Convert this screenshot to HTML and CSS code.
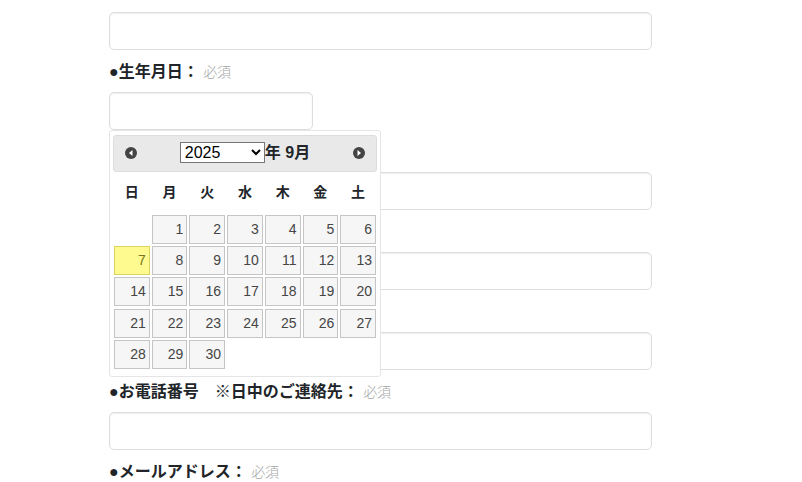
FILE: index.html
```html
<!DOCTYPE html>
<html lang="ja">
<head>
<meta charset="utf-8">
<title>フォーム</title>
<link rel="stylesheet" href="styles.css">
</head>
<body>
<form class="form">
  <div class="field"><input class="box" type="text" aria-label="氏名"></div>
  <div class="field">
    <label class="label" for="birth">●生年月日： <span class="req">必須</span></label>
    <div class="anchor">
      <input class="box box-short" id="birth" type="text">
      <div class="picker">
        <div class="head">
          <button class="nav" type="button" aria-label="前月">
            <svg viewBox="0 0 12 12" width="12" height="12"><circle cx="6" cy="6" r="6" fill="#444"/><path fill="#fff" d="M7.500 3v6L4 6z"/></svg>
          </button>
          <div class="title"><select class="year" aria-label="年"><option>2025</option></select>年 9月</div>
          <button class="nav" type="button" aria-label="翌月">
            <svg viewBox="0 0 12 12" width="12" height="12"><circle cx="6" cy="6" r="6" fill="#444"/><path fill="#fff" d="M4.500 3v6L8 6z"/></svg>
          </button>
        </div>
        <table class="days">
          <thead><tr><th>日</th><th>月</th><th>火</th><th>水</th><th>木</th><th>金</th><th>土</th></tr></thead>
          <tbody>
            <tr><td></td><td><a href="#">1</a></td><td><a href="#">2</a></td><td><a href="#">3</a></td><td><a href="#">4</a></td><td><a href="#">5</a></td><td><a href="#">6</a></td></tr>
            <tr><td><a class="today" href="#">7</a></td><td><a href="#">8</a></td><td><a href="#">9</a></td><td><a href="#">10</a></td><td><a href="#">11</a></td><td><a href="#">12</a></td><td><a href="#">13</a></td></tr>
            <tr><td><a href="#">14</a></td><td><a href="#">15</a></td><td><a href="#">16</a></td><td><a href="#">17</a></td><td><a href="#">18</a></td><td><a href="#">19</a></td><td><a href="#">20</a></td></tr>
            <tr><td><a href="#">21</a></td><td><a href="#">22</a></td><td><a href="#">23</a></td><td><a href="#">24</a></td><td><a href="#">25</a></td><td><a href="#">26</a></td><td><a href="#">27</a></td></tr>
            <tr><td><a href="#">28</a></td><td><a href="#">29</a></td><td><a href="#">30</a></td><td></td><td></td><td></td><td></td></tr>
          </tbody>
        </table>
      </div>
    </div>
  </div>
  <div class="field field-plain"><input class="box" type="text" aria-label="郵便番号"></div>
  <div class="field field-plain"><input class="box" type="text" aria-label="ご住所"></div>
  <div class="field field-plain"><input class="box" type="text" aria-label="建物名"></div>
  <div class="field">
    <label class="label" for="tel">●お電話番号　※日中のご連絡先： <span class="req">必須</span></label>
    <input class="box" id="tel" type="tel">
  </div>
  <div class="field"><span class="label">●メールアドレス： <span class="req">必須</span></span></div>
</form>
</body>
</html>
```
FILE: styles.css
```css
* { box-sizing: border-box; }

body {
  margin: 0;
  overflow: hidden;
  background: #fff;
  color: #212529;
  font: 16px/24px "Liberation Sans", "Noto Sans CJK JP", sans-serif;
}

.form {
  max-width: 543px;
  margin: 12px 150px 0 109px;
}

.label {
  display: block;
  padding: 10px 0 8px;
  font-weight: 700;
}

.req {
  color: #a8a8a8;
  font-size: 14px;
  font-weight: 300;
}

.box {
  display: block;
  width: 100%;
  height: 38px;
  padding: 6px 12px;
  border: 1px solid #ddd;
  border-radius: 5px;
  background: #fff;
  box-shadow: inset 0 1px 2px #eee;
  font: inherit;
}

.box-short { width: 204px; }

.field-plain { padding-top: 42px; }

.anchor { position: relative; }

.picker {
  position: absolute;
  z-index: 1;
  top: 100%;
  left: 0;
  width: 272px;
  padding: 4px 3px 6px;
  border: 1px solid #e5e5e5;
  border-radius: 3px;
  background: #fff;
}

.head {
  display: flex;
  align-items: center;
  justify-content: space-between;
  height: 37px;
  padding: 0 11px 2px;
  border: 1px solid #ddd;
  border-radius: 3px;
  background: #e9e9e9;
}

.nav {
  display: flex;
  padding: 0;
  border: 0;
  background: none;
}

.title {
  display: flex;
  align-items: center;
  color: #212529;
  font-weight: 700;
}

.year {
  width: 85px;
  height: 21px;
  padding: 0;
  border: 1px solid #767676;
  border-radius: 0;
  background: #fff;
  color: #000;
  font: 16px "Liberation Sans", sans-serif;
}

.days {
  width: 100%;
  height: 198px;
  border-collapse: collapse;
  table-layout: fixed;
  font-size: 14px;
}

.days th {
  height: 42px;
  padding: 0 0 2px;
  font-weight: 700;
}

.days td { padding: 1px; }

.days a {
  display: block;
  height: 29px;
  padding: 0 3px;
  border: 1px solid #c5c5c5;
  background: #f6f6f6;
  color: #454545;
  line-height: 26px;
  text-align: right;
  text-decoration: none;
}

.days .today {
  border-color: #dad55e;
  background: #fffa90;
  color: #777620;
}
```
